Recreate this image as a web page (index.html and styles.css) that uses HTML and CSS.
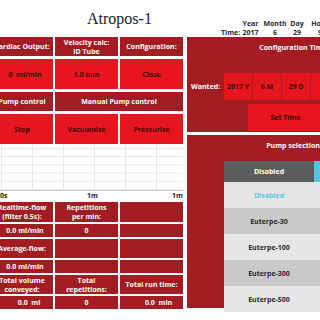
FILE: index.html
```html
<!DOCTYPE html>
<html>
<head>
<meta charset="utf-8">
<link rel="stylesheet" href="styles.css">
</head>
<body>
<div class="page">
  <div class="left">
    <div class="title">Atropos-1</div>
    <div class="controls">
      <div class="cell hd">Cardiac Output:</div>
      <div class="cell hd">Velocity calc:<br>ID Tube</div>
      <div class="cell hd">Configuration:</div>
      <div class="cell val shift">0  ml/min</div>
      <div class="cell val">1.0 mm</div>
      <div class="cell val">Close</div>
      <div class="cell hd">Pump control</div>
      <div class="cell hd span2">Manual Pump control</div>
      <div class="cell val">Stop</div>
      <div class="cell val">Vacuumize</div>
      <div class="cell val">Pressurise</div>
    </div>
    <div class="chart"></div>
    <div class="axis">
      <span class="ax0">0s</span>
      <span class="ax1">1m</span>
      <span class="ax2">1m</span>
    </div>
    <div class="stats">
      <div class="cell hd">Realtime-flow<br>(filter 0.5s):</div>
      <div class="cell hd">Repetitions<br>per min:</div>
      <div class="cell hd"></div>
      <div class="cell sv shift">0.0 ml/min</div>
      <div class="cell sv">0</div>
      <div class="cell sv"></div>
      <div class="cell hd">Average-flow:</div>
      <div class="cell hd"></div>
      <div class="cell hd"></div>
      <div class="cell sv shift">0.0 ml/min</div>
      <div class="cell sv"></div>
      <div class="cell sv"></div>
      <div class="cell hd">Total volume<br>conveyed:</div>
      <div class="cell hd">Total<br>repetitions:</div>
      <div class="cell hd">Total run time:</div>
      <div class="cell sv shift2">0.0  ml</div>
      <div class="cell sv">0</div>
      <div class="cell sv shift2">0.0  min</div>
    </div>
  </div>
  <div class="right">
    <div class="clock">
      <span></span><span></span>
      <span>Year</span><span>Month</span><span>Day</span><span>Hour</span><span>Min</span>
      <span></span><span class="tl">Time:</span>
      <span>2017</span><span>6</span><span>29</span><span>9</span><span>30</span>
    </div>
    <div class="config">
      <div class="ptitle">Configuration Time:</div>
      <div class="wanted">
        <span class="wl">Wanted:</span>
        <span class="wb">2017 Y</span>
        <span class="wb">6 M</span>
        <span class="wb">29 D</span>
        <span class="wb">9 h</span>
        <span class="wb">30 m</span>
      </div>
      <div class="setrow"><span class="setbtn">Set Time</span></div>
    </div>
    <div class="pump">
      <div class="ptitle">Pump selection:</div>
      <div class="list">
        <div class="lhead"><span class="lh1">Disabled</span><span class="lh2"></span></div>
        <div class="item light cyan">Disabled</div>
        <div class="item dark">Euterpe-30</div>
        <div class="item light">Euterpe-100</div>
        <div class="item dark">Euterpe-300</div>
        <div class="item light">Euterpe-500</div>
      </div>
    </div>
  </div>
</div>
</body>
</html>
```

FILE: styles.css
```css
html, body {
  margin: 0;
  padding: 0;
  background: #ffffff;
  overflow: hidden;
  width: 320px;
  height: 320px;
}
.page {
  display: flex;
  gap: 4px;
  margin-left: -9px;
  width: 440px;
  font-family: "Open Sans", "Noto Sans", sans-serif;
  font-weight: 700;
  font-size: 7px;
}
.left {
  width: 192px;
  flex: none;
}
.title {
  height: 37px;
  box-sizing: border-box;
  padding-left: 96px;
  padding-top: 9px;
  font-family: "Liberation Serif", serif;
  font-weight: 400;
  font-size: 16px;
  line-height: 20px;
  color: #1a1a1a;
}
.controls {
  display: grid;
  grid-template-columns: 62px 63px 63px;
  grid-template-rows: 19px 30px 19px 30px;
  column-gap: 2px;
  row-gap: 3px;
}
.cell {
  display: flex;
  align-items: center;
  justify-content: center;
  text-align: center;
  line-height: 9px;
  white-space: pre;
}
.hd {
  background: #a31c22;
  color: #ffffff;
}
.val {
  background: #e7161e;
  color: #3a0808;
}
.sv {
  background: #a31c22;
  color: #ffffff;
}
.span2 {
  grid-column: span 2;
}
.shift {
  padding-left: 6px;
}
.shift2 {
  padding-left: 14px;
}
.chart {
  margin-left: 9px;
  height: 46px;
  background-color: #ffffff;
  background-image:
    linear-gradient(to right, #e6e6e6 1px, transparent 1px),
    linear-gradient(to bottom, #e6e6e6 1px, transparent 1px);
  background-size: 31px 100%, 100% 8.2px;
  background-position: 1px 0, 0 4px;
  border-bottom: 1px solid #cfcfcf;
}
.axis {
  margin-left: 9px;
  height: 10px;
  display: flex;
  line-height: 10px;
  color: #1a1a1a;
}
.ax0 {
  width: 87px;
}
.ax2 {
  margin-left: auto;
}
.stats {
  display: grid;
  grid-template-columns: 62px 63px 63px;
  grid-template-rows: 20px 13px 19px 13px 19px 13px;
  column-gap: 2px;
  row-gap: 2px;
  margin-top: 1px;
}
.right {
  width: 214px;
  flex: none;
}
.clock {
  height: 37px;
  box-sizing: border-box;
  padding-top: 19px;
  display: grid;
  grid-template-columns: 34px 18px 23px 26px 18px 28px 28px;
  grid-template-rows: 9px 9px;
  line-height: 9px;
  color: #2a2a2a;
  text-align: center;
}
.clock .tl {
  text-align: right;
}
.config {
  height: 95px;
  box-sizing: border-box;
  background: #a31c22;
  padding-top: 6px;
}
.ptitle {
  color: #ffffff;
  text-align: center;
  line-height: 9px;
  height: 9px;
}
.wanted {
  margin-top: 21px;
  display: flex;
  gap: 1px;
  height: 27px;
}
.wl {
  width: 36px;
  box-sizing: border-box;
  padding-left: 4px;
  color: #ffffff;
  display: flex;
  align-items: center;
}
.wb {
  width: 28px;
  background: #e7161e;
  color: #3a0808;
  display: flex;
  align-items: center;
  justify-content: center;
}
.setrow {
  margin-top: 4px;
  padding-left: 61px;
  height: 27px;
  display: flex;
}
.setbtn {
  width: 75px;
  background: #e7161e;
  color: #3a0808;
  display: flex;
  align-items: center;
  justify-content: center;
}
.pump {
  margin-top: 3px;
  height: 173px;
  background: #a31c22;
  padding-top: 6px;
  box-sizing: border-box;
}
.list {
  margin-top: 11px;
  margin-left: 37px;
}
.lhead {
  display: flex;
  height: 21px;
}
.lh1 {
  width: 90px;
  background: #5c5c5c;
  color: #ffffff;
  display: flex;
  align-items: center;
  justify-content: center;
}
.lh2 {
  flex: 1;
  background: #55c4e4;
}
.item {
  height: 26px;
  width: 90px;
  padding-right: 87px;
  display: flex;
  align-items: center;
  justify-content: center;
  color: #2a2a2a;
}
.light {
  background: #e6e6e6;
}
.dark {
  background: #c9c9c9;
}
.cyan {
  color: #5cc6e4;
}
```
